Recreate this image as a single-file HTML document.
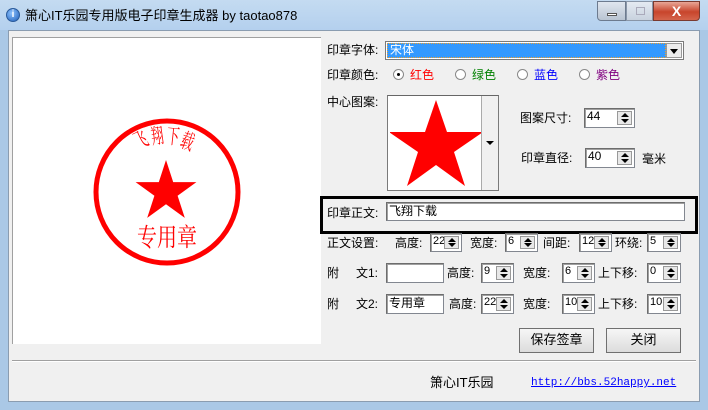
<!DOCTYPE html>
<html><head><meta charset="utf-8"><style>
*{margin:0;padding:0;box-sizing:border-box}
body{width:708px;height:410px;overflow:hidden;background:#aac8e6;font-family:"Liberation Sans","Noto Sans CJK SC","WenQuanYi Zen Hei",sans-serif;font-size:12px;color:#000;position:relative}
.a{position:absolute}
.t{position:absolute;font-size:12px;line-height:14px;white-space:nowrap}
.in{position:absolute;background:#fff;border:1px solid #828790;border-top-color:#6d6d6d;border-left-color:#6d6d6d;box-shadow:inset 1px 1px 0 #a0a0a0;font-size:11px;line-height:15px;padding-left:2px;font-family:"Liberation Sans","Noto Sans CJK SC",sans-serif;overflow:hidden}
.sp{position:absolute;right:2px;top:2px;width:15px;bottom:2px;background:#e8e8e8;border:1px solid #999}
.sp:before{content:"";position:absolute;left:3px;top:1px;border:4px solid transparent;border-bottom:4px solid #000;border-top:0}
.sp:after{content:"";position:absolute;left:3px;bottom:1px;border:4px solid transparent;border-top:4px solid #000;border-bottom:0}
.btn{position:absolute;background:linear-gradient(#f6f6f6,#dcdcdc);border:1px solid #707070;font-size:13px;text-align:center;line-height:22px}
.rad{position:absolute;width:11px;height:11px;border-radius:50%;border:1px solid #888;background:#fff}
</style></head><body>
<div class="a" style="left:0;top:0;width:708px;height:30px;background:linear-gradient(#c4dbf1,#b4d0ee)"></div>
<div class="a" style="left:6px;top:8px;width:14px;height:14px;border-radius:50%;background:radial-gradient(circle at 40% 35%,#8ec3ff,#1f5eb8);border:1px solid #2a5a9a;color:#fff;font-size:10px;line-height:12px;text-align:center;font-weight:bold">i</div>
<div class="t" style="left:25px;top:8px;font-size:13px;line-height:15px">箫心IT乐园专用版电子印章生成器 by taotao878</div>
<div class="a" style="left:597px;top:1px;width:29px;height:20px;border:1px solid #6d7b8f;border-radius:0 0 0 4px;background:linear-gradient(#dfe6ef,#b9c4d2)"><div class="a" style="left:9px;top:11px;width:10px;height:3px;background:#fff;border:1px solid #555"></div></div>
<div class="a" style="left:626px;top:1px;width:27px;height:20px;border:1px solid #8996a8;background:linear-gradient(#e4eaf2,#c8d2de)"><div class="a" style="left:9px;top:5px;width:9px;height:8px;border:1px solid #aab"></div></div>
<div class="a" style="left:653px;top:1px;width:47px;height:20px;border:1px solid #7a3a30;border-radius:0 0 4px 0;background:linear-gradient(#e8a696,#c8452c 55%,#d4654c);color:#fff;font-weight:bold;font-size:14px;text-align:center;line-height:18px">X</div>
<div class="a" style="left:8px;top:30px;width:692px;height:372px;background:#f0f0f0;border:1px solid #8a9cb0"></div>
<div class="a" style="left:12px;top:37px;width:309px;height:307px;background:#fff;border-left:1px solid #a0a0a0;border-top:1px solid #a0a0a0"></div>
<svg class="a" style="left:12px;top:37px" width="309" height="307">
<circle cx="155" cy="155" r="71" fill="none" stroke="#f00" stroke-width="5"/>
<polygon points="154,123 161.2,145.1 184.4,145.1 165.6,158.8 172.8,180.9 154,167.2 135.2,180.9 142.4,158.8 123.6,145.1 146.8,145.1" fill="#f00"/>
<text transform="translate(155,209) scale(1,1.25)" fill="#f00" font-size="20" text-anchor="middle" font-family="Noto Serif CJK SC,serif">专用章</text>
<g fill="#f00" font-size="15" font-family="Noto Serif CJK SC,serif">
<text transform="translate(126,112) rotate(-25) scale(0.85,1.4)">飞</text>
<text transform="translate(140,107) rotate(-8) scale(0.85,1.4)">翔</text>
<text transform="translate(154,106) rotate(6) scale(0.85,1.4)">下</text>
<text transform="translate(167,109) rotate(20) scale(0.85,1.4)">载</text>
</g>
</svg>
<div class="t" style="left:327px;top:43px">印章字体:</div>
<div class="a" style="left:385px;top:41px;width:299px;height:19px;background:#fff;border:1px solid #7a7a7a"><div class="a" style="left:1px;top:1px;width:279px;height:15px;background:#3399ff;border:1px dotted #f0a030;color:#fff;font-size:12px;line-height:13px;padding-left:2px">宋体</div><div class="a" style="right:1px;top:1px;width:16px;height:15px;background:#ececec;border:1px solid #999"><div class="a" style="left:3px;top:5px;border:4px solid transparent;border-top:5px solid #000;border-bottom:0"></div></div></div>
<div class="t" style="left:327px;top:68px">印章颜色:</div>
<div class="rad" style="left:393px;top:69px"><div class="a" style="left:3px;top:3px;width:3px;height:3px;background:#000;border-radius:50%"></div></div><div class="t" style="left:410px;top:68px;color:#f00">红色</div>
<div class="rad" style="left:455px;top:69px"></div><div class="t" style="left:472px;top:68px;color:#008000">绿色</div>
<div class="rad" style="left:517px;top:69px"></div><div class="t" style="left:534px;top:68px;color:#00f">蓝色</div>
<div class="rad" style="left:579px;top:69px"></div><div class="t" style="left:596px;top:68px;color:#800080">紫色</div>
<div class="t" style="left:327px;top:95px">中心图案:</div>
<div class="a" style="left:387px;top:95px;width:112px;height:96px;background:#fff;border:1px solid #7a7a7a;border-top-color:#666">
<svg class="a" style="left:2px;top:2px" width="92" height="90"><polygon points="46,2 57,34 93,34 64,54 75,88 46,67 17,88 28,54 -1,34 35,34" fill="#f00"/></svg>
<div class="a" style="right:0;top:0;width:17px;height:94px;background:#f0f0f0;border-left:1px solid #aaa"><div class="a" style="left:4px;top:45px;border:4px solid transparent;border-top:4px solid #000;border-bottom:0"></div></div></div>
<div class="t" style="left:520px;top:111px">图案尺寸:</div>
<div class="in" style="left:584px;top:108px;width:51px;height:20px;font-size:12px">44<div class="sp"></div></div>
<div class="t" style="left:521px;top:151px">印章直径:</div>
<div class="in" style="left:585px;top:148px;width:50px;height:20px;font-size:12px">40<div class="sp"></div></div>
<div class="t" style="left:642px;top:152px">毫米</div>
<div class="a" style="left:320px;top:196px;width:378px;height:38px;border:3px solid #000"></div>
<div class="t" style="left:327px;top:206px">印章正文:</div>
<div class="in" style="left:386px;top:202px;width:299px;height:19px;font-size:12px;font-family:'Noto Sans CJK SC',sans-serif">飞翔下载</div>
<div class="t" style="left:327px;top:236px">正文设置:</div>
<div class="t" style="left:395px;top:236px">高度:</div><div class="in" style="left:430px;top:233px;width:32px;height:19px">22<div class="sp"></div></div>
<div class="t" style="left:470px;top:236px">宽度:</div><div class="in" style="left:505px;top:233px;width:33px;height:19px">6<div class="sp"></div></div>
<div class="t" style="left:543px;top:236px">间距:</div><div class="in" style="left:579px;top:233px;width:33px;height:19px">12<div class="sp"></div></div>
<div class="t" style="left:615px;top:236px">环绕:</div><div class="in" style="left:647px;top:233px;width:34px;height:19px">5<div class="sp"></div></div>
<div class="t" style="left:327px;top:266px">附</div><div class="t" style="left:356px;top:266px">文1:</div>
<div class="in" style="left:386px;top:263px;width:58px;height:20px"></div>
<div class="t" style="left:447px;top:266px">高度:</div><div class="in" style="left:481px;top:263px;width:33px;height:20px">9<div class="sp"></div></div>
<div class="t" style="left:523px;top:266px">宽度:</div><div class="in" style="left:562px;top:263px;width:33px;height:20px">6<div class="sp"></div></div>
<div class="t" style="left:598px;top:266px">上下移:</div><div class="in" style="left:647px;top:263px;width:34px;height:20px">0<div class="sp"></div></div>
<div class="t" style="left:327px;top:297px">附</div><div class="t" style="left:356px;top:297px">文2:</div>
<div class="in" style="left:386px;top:294px;width:58px;height:20px;font-size:12px;font-family:'Noto Sans CJK SC',sans-serif">专用章</div>
<div class="t" style="left:449px;top:297px">高度:</div><div class="in" style="left:481px;top:294px;width:33px;height:20px">22<div class="sp"></div></div>
<div class="t" style="left:523px;top:297px">宽度:</div><div class="in" style="left:562px;top:294px;width:33px;height:20px">10<div class="sp"></div></div>
<div class="t" style="left:598px;top:297px">上下移:</div><div class="in" style="left:647px;top:294px;width:34px;height:20px">10<div class="sp"></div></div>
<div class="btn" style="left:519px;top:328px;width:75px;height:25px">保存签章</div>
<div class="btn" style="left:606px;top:328px;width:75px;height:25px">关闭</div>
<div class="a" style="left:12px;top:360px;width:684px;height:2px;border-top:1px solid #a0a0a0;border-bottom:1px solid #fff"></div>
<div class="t" style="left:430px;top:376px;font-size:13px">箫心IT乐园</div>
<div class="t" style="left:531px;top:376px;color:#00f;text-decoration:underline;font-family:'Liberation Mono',monospace;font-size:11px">http://bbs.52happy.net</div>
</body></html>
